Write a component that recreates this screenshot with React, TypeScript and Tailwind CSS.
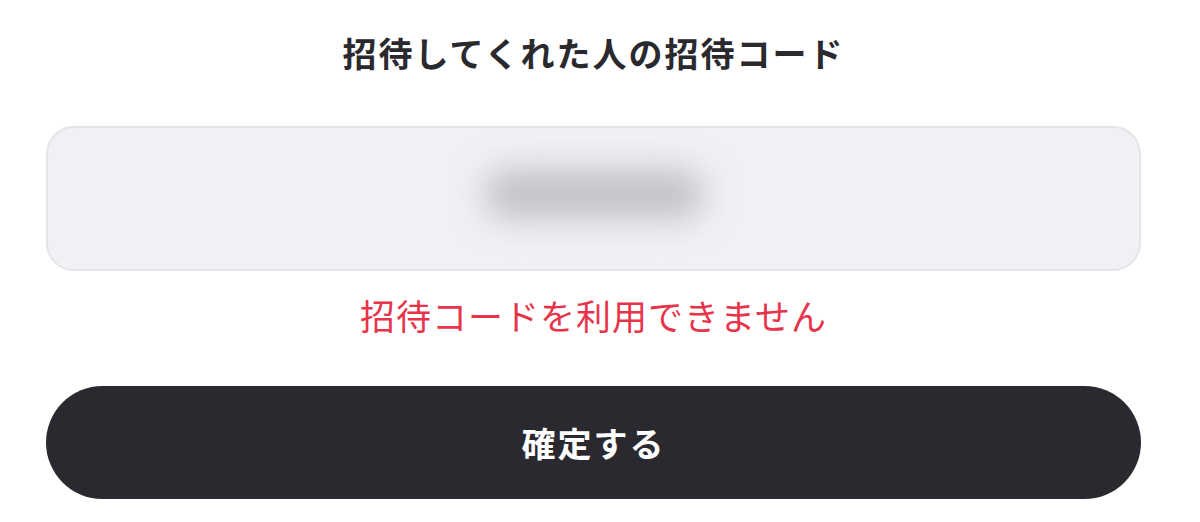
export default function App() {
  return (
    <div
      className="w-[1200px] h-[522px] bg-white flex flex-col items-center pl-[46px] pr-[59px]"
      style={{ fontFamily: '"Noto Sans CJK JP", "Noto Sans", sans-serif' }}
    >
      <h1 className="mt-[29px] text-[34px] leading-[48px] font-bold tracking-[2px] text-[#2a2a2e]">
        招待してくれた人の招待コード
      </h1>
      <div className="mt-[49px] w-full h-[145px] rounded-[28px] bg-[#f0f0f5] border-2 border-[#e4e4ea] flex items-center justify-center">
        <div className="mb-[10px] w-[220px] h-[50px] rounded-full bg-[#c2c2c7] blur-[16px]" />
      </div>
      <p className="mt-[22px] text-[35px] leading-[44px] tracking-[1px] text-[#e8344b]">
        招待コードを利用できません
      </p>
      <button className="mt-[49px] w-full h-[113px] rounded-full bg-[#2a292f] text-white text-[34px] font-bold tracking-[2px]">
        確定する
      </button>
    </div>
  );
}
